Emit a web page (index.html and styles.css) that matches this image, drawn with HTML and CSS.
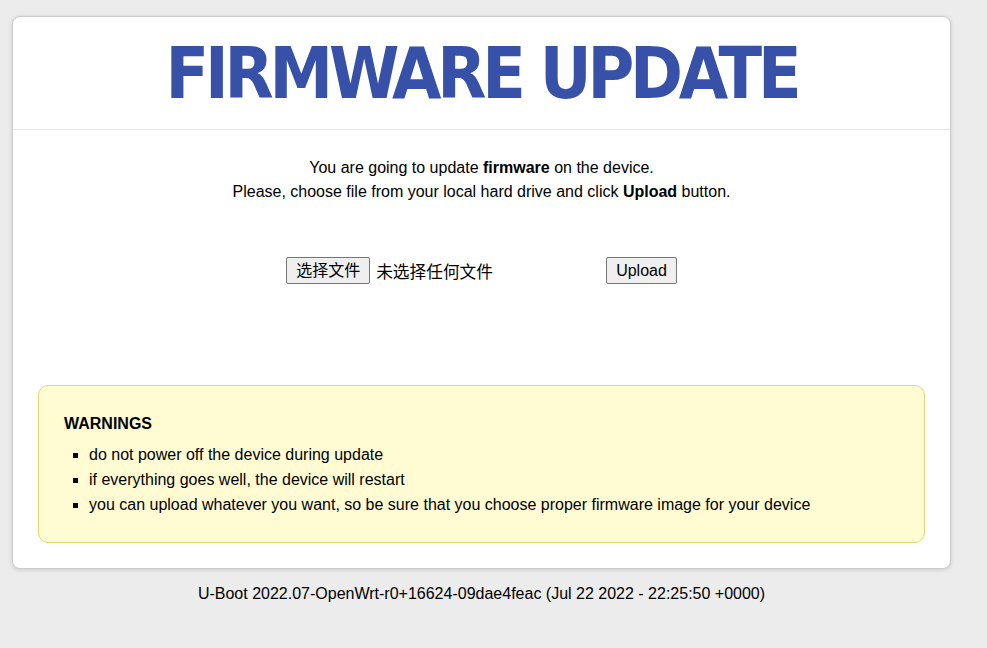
FILE: index.html
```html
<!DOCTYPE html>
<html lang="en">
<head>
  <meta charset="UTF-8" />
  <title>Firmware update</title>
  <link rel="stylesheet" href="styles.css">
</head>
<body>

  <div class="wrap">
    <!-- Main card -->
    <div class="card">
      <div class="card-header">
        <h1>FIRMWARE UPDATE</h1>
      </div>

      <div class="card-body">
        <p class="intro">
          You are going to update <strong>firmware</strong> on the device.<br>
          Please, choose file from your local hard drive and click <strong>Upload</strong> button.
        </p>

        <!-- Upload form -->
        <form class="upload-form" method="post" enctype="multipart/form-data">
          <label class="file-field">
            <input type="file" name="firmware" class="file-input" />
            <span class="btn">选择文件</span>
            <span class="file-name">未选择任何文件</span>
          </label>
          <button type="submit" class="btn">Upload</button>
        </form>

        <!-- Warnings -->
        <div class="warning">
          <strong class="warning-title">WARNINGS</strong>
          <ul>
            <li>do not power off the device during update</li>
            <li>if everything goes well, the device will restart</li>
            <li>you can upload whatever you want, so be sure that you choose proper firmware image for your device</li>
          </ul>
        </div>
      </div>
    </div>

    <p class="footer">U-Boot 2022.07-OpenWrt-r0+16624-09dae4feac (Jul 22 2022 - 22:25:50 +0000)</p>
  </div>

</body>
</html>
```

FILE: styles.css
```css
* {
  box-sizing: border-box;
}

body {
  margin: 0;
  background: #ececec;
  font-family: "Liberation Sans", Arial, "Noto Sans CJK SC", sans-serif;
  font-size: 16px;
  color: #000;
}

.wrap {
  width: 939px;
  margin-left: 12px;
  padding-top: 16px;
}

.card {
  background: #fff;
  border: 1px solid #cdcdcd;
  border-radius: 8px;
  box-shadow: 0 1px 4px rgba(0, 0, 0, 0.15);
}

.card-header {
  height: 113px;
  border-bottom: 1px solid #e6e6e6;
  display: flex;
  align-items: center;
  justify-content: center;
}

.card-header h1 {
  margin: 0;
  font-family: "DejaVu Sans", Tahoma, sans-serif;
  font-stretch: condensed;
  font-weight: bold;
  font-size: 71px;
  letter-spacing: -4.2px;
  color: #3751a9;
}

.card-body {
  padding: 26px 25px 25px;
}

.intro {
  margin: 0;
  text-align: center;
  line-height: 24px;
}

/* File picker row */
.upload-form {
  display: flex;
  justify-content: center;
  align-items: center;
  gap: 4px;
  margin-top: 53px;
}

.file-field {
  width: 316px;
  display: flex;
  align-items: center;
  gap: 6px;
  cursor: pointer;
}

.file-input {
  display: none;
}

.file-name {
  font-family: "Noto Sans CJK SC", sans-serif;
  font-size: 16.7px;
}

.btn {
  display: inline-block;
  background: #efefef;
  border: 1px solid #767676;
  border-radius: 2px;
  padding: 3px 9px;
  font-family: "Liberation Sans", Arial, "Noto Sans CJK SC", sans-serif;
  font-size: 16px;
  line-height: 19px;
  color: #000;
  cursor: pointer;
}

/* Warning box */
.warning {
  margin-top: 101px;
  background: #fffcd3;
  border: 1px solid #e6d67a;
  border-radius: 10px;
  padding: 26px 25px 25px;
}

.warning-title {
  display: block;
  line-height: 24px;
}

.warning ul {
  margin: 6px 0 0;
  padding-left: 25px;
  list-style: square;
}

.warning li {
  line-height: 25px;
}

.footer {
  margin: 16px 0 0;
  text-align: center;
  line-height: 18px;
}
```
